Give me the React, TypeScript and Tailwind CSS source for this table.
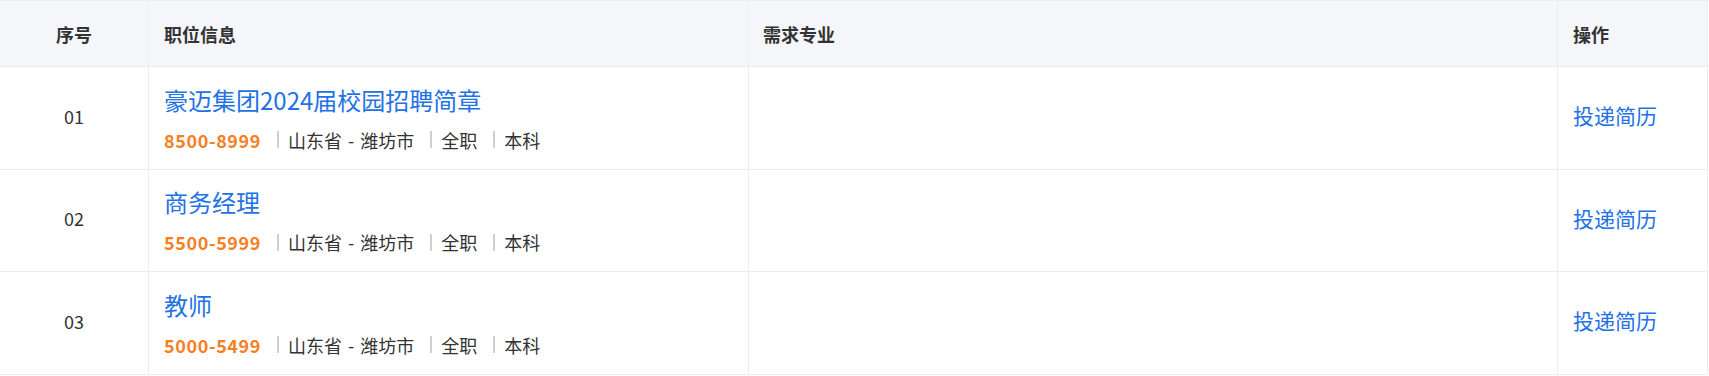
import React from "react";

const rows = [
  { no: "01", title: "豪迈集团2024届校园招聘简章", salary: "8500-8999", h: "h-[103px]" },
  { no: "02", title: "商务经理", salary: "5500-5999", h: "h-[102px]" },
  { no: "03", title: "教师", salary: "5000-5499", h: "h-[103px]" },
];

const font = { fontFamily: '"Noto Sans CJK SC", "Noto Sans", sans-serif' };

function Sep() {
  return <span className="ml-[16px] mr-[9px] inline-block h-[17px] w-[2px] bg-[#cfcfcf]" />;
}

export default function App() {
  return (
    <div className="bg-white" style={font}>
      <div className="w-[1708px] border-t border-r border-[#ebedf3]">
        <div className="grid h-[66px] grid-cols-[149px_600px_809px_150px] border-b border-[#ebedf3] bg-[#f5f6fa] text-[18px] font-bold leading-[24px] text-[#333]">
          <div className="flex items-center justify-center border-r border-[#ebedf3]">序号</div>
          <div className="flex items-center border-r border-[#ebedf3] pl-[15px]">职位信息</div>
          <div className="flex items-center border-r border-[#ebedf3] pl-[14px]">需求专业</div>
          <div className="flex items-center pl-[15px]">操作</div>
        </div>
        {rows.map((r) => (
          <div
            key={r.no}
            className={`grid ${r.h} grid-cols-[149px_600px_809px_150px] border-b border-[#ebedf3]`}
          >
            <div className="flex items-center justify-center border-r border-[#ebedf3] pb-[4px] text-[18px] text-[#333]">
              {r.no}
            </div>
            <div className="flex flex-col justify-center gap-[13px] border-r border-[#ebedf3] pl-[15px]">
              <div className="text-[24px] leading-[30px] text-[#2272e6]">{r.title}</div>
              <div className="flex items-center text-[18px] leading-[24px] text-[#333]">
                <span className="font-bold tracking-[0.6px] text-[#f5801f]">{r.salary}</span>
                <Sep />
                <span className="[word-spacing:2px]">山东省 - 潍坊市</span>
                <Sep />
                <span>全职</span>
                <Sep />
                <span>本科</span>
              </div>
            </div>
            <div className="border-r border-[#ebedf3]" />
            <div className="flex items-center pl-[15px] pb-[4px] text-[21px] text-[#2272e6]">投递简历</div>
          </div>
        ))}
      </div>
    </div>
  );
}
